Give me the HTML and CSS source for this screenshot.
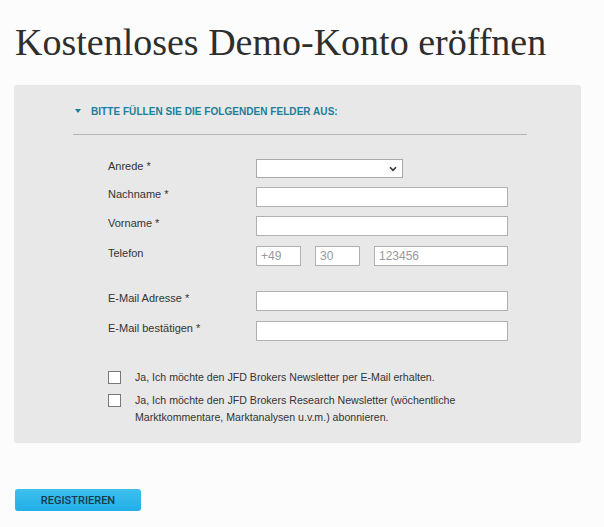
FILE: index.html
```html
<!DOCTYPE html>
<html lang="de">
<head>
<meta charset="utf-8">
<title>Demo-Konto</title>
<link rel="stylesheet" href="styles.css">
</head>
<body>
<h1 class="title">Kostenloses Demo-Konto eröffnen</h1>
<div class="panel">
  <div class="inner">
    <div class="section-head">
      <span class="tri"></span>
      <span class="head-text">BITTE FÜLLEN SIE DIE FOLGENDEN FELDER AUS:</span>
    </div>
    <div class="fields">
      <div class="row">
        <label class="lbl">Anrede *</label>
        <div class="select"><svg class="chev" width="8" height="6" viewBox="0 0 8 6"><path d="M1 1.2 L4 4.4 L7 1.2" fill="none" stroke="#333" stroke-width="1.6"/></svg></div>
      </div>
      <div class="row">
        <label class="lbl">Nachname *</label>
        <div class="input"></div>
      </div>
      <div class="row">
        <label class="lbl">Vorname *</label>
        <div class="input"></div>
      </div>
      <div class="row phone-row">
        <label class="lbl">Telefon</label>
        <div class="phone">
          <div class="input small">+49</div>
          <div class="input small">30</div>
          <div class="input grow">123456</div>
        </div>
      </div>
      <div class="row spaced">
        <label class="lbl">E-Mail Adresse *</label>
        <div class="input"></div>
      </div>
      <div class="row confirm-row">
        <label class="lbl">E-Mail bestätigen *</label>
        <div class="input"></div>
      </div>
    </div>
    <div class="checks">
      <div class="check">
        <span class="box"></span>
        <span class="ctext">Ja, Ich möchte den JFD Brokers Newsletter per E-Mail erhalten.</span>
      </div>
      <div class="check">
        <span class="box"></span>
        <span class="ctext">Ja, Ich möchte den JFD Brokers Research Newsletter (wöchentliche Marktkommentare, Marktanalysen u.v.m.) abonnieren.</span>
      </div>
    </div>
  </div>
</div>
<div class="actions">
  <button class="btn">REGISTRIEREN</button>
</div>
</body>
</html>
```
FILE: styles.css
```css
html, body {
  margin: 0;
  padding: 0;
  background: #fcfcfc;
}
body {
  padding: 0 23px 0 14px;
  font-family: "Liberation Sans", Arial, sans-serif;
  color: #333;
}
.title {
  margin: 0;
  padding: 19px 0 0 1px;
  font-family: "Liberation Serif", "Times New Roman", serif;
  font-weight: normal;
  font-size: 38px;
  line-height: 46px;
  color: #2e2e2e;
  height: 66px;
}
.panel {
  background: #e8e8e8;
  border-radius: 3px;
  padding: 20px 54px 17px 59px;
}
.section-head {
  display: flex;
  align-items: center;
  gap: 10px;
  padding: 0 0 0 2px;
  height: 12px;
  padding-bottom: 17px;
  border-bottom: 1px solid #b4b4b4;
}
.tri {
  width: 0;
  height: 0;
  border-left: 3.5px solid transparent;
  border-right: 3.5px solid transparent;
  border-top: 4px solid #1c7e99;
}
.head-text {
  font-size: 10px;
  font-weight: bold;
  color: #1c7e99;
  letter-spacing: 0.05px;
}
.fields {
  padding: 24px 0 0 35px;
  display: flex;
  flex-direction: column;
  gap: 9px;
}
.row {
  display: grid;
  grid-template-columns: 148px 252px;
  align-items: start;
  font-size: 11px;
}
.row.phone-row {
  margin-top: 1px;
}
.row.spaced {
  margin-top: 16px;
}
.row.confirm-row {
  margin-top: 1px;
}
.lbl {
  padding-top: 1px;
  color: #333;
}
.select {
  width: 147px;
  height: 19px;
  box-sizing: border-box;
  border: 1px solid #a9a9a9;
  background: #fff;
  display: flex;
  align-items: center;
  justify-content: flex-end;
  padding-right: 5px;
}
.input {
  height: 20px;
  box-sizing: border-box;
  border: 1px solid #b0b0b0;
  background: #fff;
  font-size: 12px;
  color: #999;
  padding: 2px 4px;
  line-height: 14px;
}
.phone {
  display: flex;
  gap: 14px;
}
.input.small {
  width: 45px;
}
.input.grow {
  flex: 1;
}
.checks {
  padding: 28px 0 0 35px;
  display: flex;
  flex-direction: column;
  gap: 6px;
}
.check {
  display: flex;
  align-items: flex-start;
  gap: 14px;
  font-size: 10.6px;
  line-height: 17px;
  color: #333;
}
.box {
  flex: none;
  width: 13px;
  height: 13px;
  box-sizing: border-box;
  border: 1px solid #777;
  background: #fff;
  margin-top: 2px;
}
.ctext {
  width: 345px;
}
.actions {
  padding: 46px 0 0 1px;
}
.btn {
  width: 126px;
  height: 22px;
  border: none;
  border-radius: 3px;
  background: linear-gradient(#3ec0ef, #22aee6);
  color: #163a4c;
  font-family: Roboto, "Liberation Sans", Arial, sans-serif;
  font-weight: 500;
  font-size: 11px;
  padding: 0;
}
```
